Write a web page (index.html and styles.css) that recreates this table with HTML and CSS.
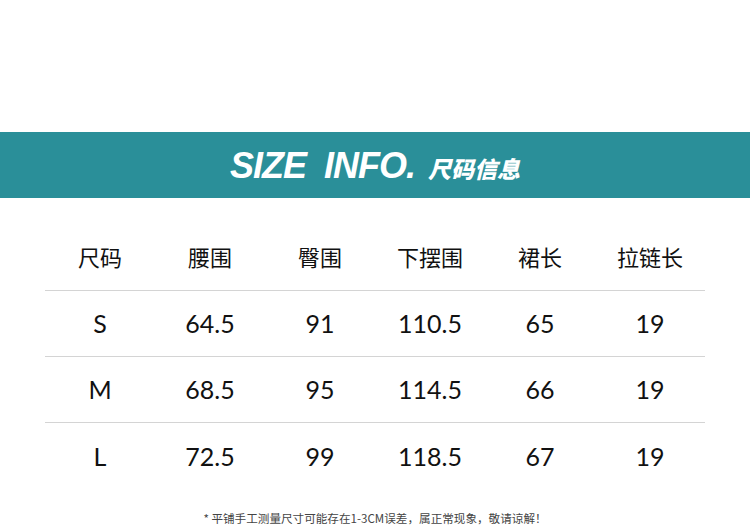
FILE: index.html
```html
<!DOCTYPE html>
<html lang="zh">
<head>
<meta charset="utf-8">
<link rel="stylesheet" href="styles.css">
</head>
<body>
<div class="page">
  <div class="band">
    <span class="title-en">SIZE&nbsp;&nbsp;INFO.</span><span class="title-zh">尺码信息</span>
  </div>
  <div class="table">
    <div class="row head">
      <div class="cell">尺码</div><div class="cell">腰围</div><div class="cell">臀围</div><div class="cell">下摆围</div><div class="cell">裙长</div><div class="cell">拉链长</div>
    </div>
    <div class="row">
      <div class="cell">S</div><div class="cell">64.5</div><div class="cell">91</div><div class="cell">110.5</div><div class="cell">65</div><div class="cell">19</div>
    </div>
    <div class="row">
      <div class="cell">M</div><div class="cell">68.5</div><div class="cell">95</div><div class="cell">114.5</div><div class="cell">66</div><div class="cell">19</div>
    </div>
    <div class="row last">
      <div class="cell">L</div><div class="cell">72.5</div><div class="cell">99</div><div class="cell">118.5</div><div class="cell">67</div><div class="cell">19</div>
    </div>
  </div>
  <div class="note">* 平铺手工测量尺寸可能存在1-3CM误差，属正常现象，敬请谅解！</div>
</div>
</body>
</html>
```
FILE: styles.css
```css
html, body {
  margin: 0;
  padding: 0;
  background: #ffffff;
}
.page {
  width: 750px;
  height: 529px;
  padding-top: 132px;
  box-sizing: border-box;
  font-family: "Noto Sans CJK SC", "Noto Sans", sans-serif;
  color: #111;
}
.band {
  height: 66px;
  background: #2a8f99;
  display: flex;
  align-items: center;
  justify-content: center;
  color: #fff;
}
.title-en {
  font-family: "Liberation Sans", Arial, sans-serif;
  font-weight: bold;
  font-style: italic;
  font-size: 36px;
  letter-spacing: -1px;
  margin-right: 13px;
  margin-top: 2px;
}
.title-zh {
  font-family: "Noto Sans CJK SC", sans-serif;
  font-weight: 900;
  font-style: italic;
  font-size: 23px;
  margin-top: 6px;
}
.table {
  margin: 27px 45px 0 45px;
  width: 660px;
}
.row {
  display: grid;
  grid-template-columns: repeat(6, 110px);
  height: 66px;
  align-items: center;
  border-bottom: 1px solid #d4d4d4;
  box-sizing: border-box;
}
.row.last {
  border-bottom: none;
}
.cell {
  text-align: center;
  font-family: "Lato", "Noto Sans CJK SC", sans-serif;
  font-size: 25px;
  line-height: 1;
  color: #111;
}
.head .cell {
  font-family: "Noto Sans CJK SC", sans-serif;
  font-size: 22px;
  font-weight: 400;
  padding-bottom: 4px;
}
.note {
  margin-top: 21px;
  text-align: center;
  font-size: 11.6px;
  color: #444;
}
```
